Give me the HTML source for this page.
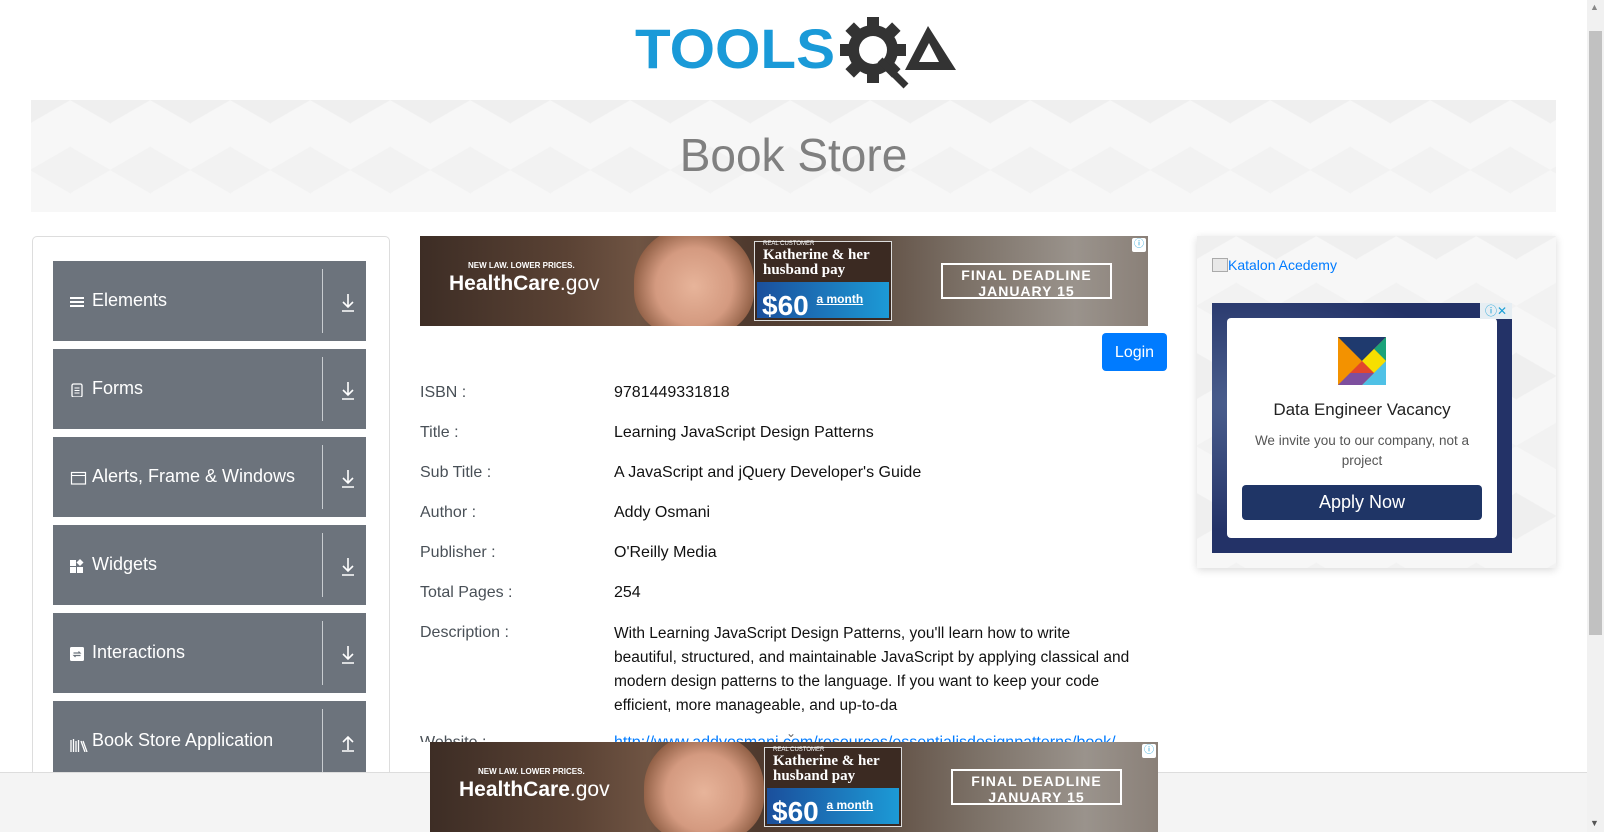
<!DOCTYPE html>
<html><head><meta charset="utf-8"><style>
*{margin:0;padding:0;box-sizing:border-box}
body{width:1604px;height:832px;overflow:hidden;background:#fff;font-family:"Liberation Sans","DejaVu Sans",sans-serif;position:relative;color:#212529}
.abs{position:absolute}
.banner{left:31px;top:100px;width:1525px;height:112px;background-color:#f7f7f7;
background-image:linear-gradient(30deg,#efefef 12%,transparent 12.5%,transparent 87%,#efefef 87.5%),linear-gradient(150deg,#efefef 12%,transparent 12.5%,transparent 87%,#efefef 87.5%),linear-gradient(30deg,#f2f2f2 12%,transparent 12.5%,transparent 87%,#f2f2f2 87.5%),linear-gradient(150deg,#f2f2f2 12%,transparent 12.5%,transparent 87%,#f2f2f2 87.5%);
background-size:80px 140px;background-position:0 0,0 0,40px 70px,40px 70px}
.title{left:0;width:1587px;top:128px;text-align:center;font-size:46px;color:#808080;font-weight:300}
.side{left:32px;top:236px;width:358px;height:560px;border:1px solid #ddd;border-radius:5px}
.item{left:53px;width:313px;height:80px;background:#6c737c;color:#fff;font-size:18px}
.item .t{position:absolute;left:39px;top:29px}
.item .ic{position:absolute;left:17px;top:34px;width:14px;height:14px}
.item .sep{position:absolute;left:269px;top:8px;width:1px;height:64px;background:#c8ccd0}
.item .ar{position:absolute;left:284px;top:25px;width:22px;height:28px}
.ad{width:728px;height:90px;overflow:hidden;background:linear-gradient(90deg,#3d2d25 0%,#5a4234 20%,#6f5443 30%,#4f3a2e 45%,#5c4a3e 60%,#7c7167 75%,#9a938c 90%,#8a8078 100%)}
.ad .face{position:absolute;left:214px;top:-10px;width:120px;height:110px;border-radius:50% 50% 40% 40%;background:radial-gradient(ellipse at 50% 55%,#e7b49a 0%,#d49a80 45%,#8a5a40 75%,transparent 80%)}
.ad .nl{position:absolute;left:48px;top:25px;font-size:8px;font-weight:bold;color:#fff}
.ad .hc{position:absolute;left:29px;top:36px;font-size:21px;color:#fff}
.ad .box{position:absolute;left:334px;top:5px;width:138px;height:80px;border:1px solid #ddd;background:#3b2a22}
.ad .box .k{position:absolute;left:8px;top:6px;font-family:"Liberation Serif",serif;font-weight:bold;font-size:15px;line-height:15px;color:#fff}
.ad .box .m{position:absolute;left:2px;top:40px;width:132px;height:36px;background:linear-gradient(90deg,#1b4f9c,#1c9ad6);color:#fff;font-weight:bold;font-size:28px;padding-left:5px;line-height:34px}
.ad .box .m span{font-size:12px;vertical-align:12px;text-decoration:underline}
.ad .fd{position:absolute;left:521px;top:27px;width:171px;height:36px;border:2px solid #fff;color:#fff;font-weight:bold;font-size:14px;text-align:center;line-height:16px;padding-top:2px;letter-spacing:1px}
.ad .i{position:absolute;right:2px;top:2px;width:14px;height:14px;background:#fff;color:#1a9fd6;font-size:10px;text-align:center;line-height:14px;border-radius:2px}
.lbl{left:420px;font-size:16px;color:#495057}
.val{left:614px;font-size:16px;color:#111}
</style></head><body>
<!-- logo -->
<svg class="abs" style="left:620px;top:10px" width="360" height="85" viewBox="620 10 360 85">
<text x="635" y="68" font-family="Liberation Sans,sans-serif" font-weight="bold" font-size="56" fill="#1a9ad8" textLength="200" lengthAdjust="spacingAndGlyphs">TOOLS</text>
<g fill="#333" transform="translate(873 50)"><circle r="25"/>
<rect x="-6" y="-33" width="12" height="66"/><rect x="-33" y="-6" width="66" height="12"/><rect x="-6" y="-33" width="12" height="66" transform="rotate(45)"/><rect x="-6" y="-33" width="12" height="66" transform="rotate(-45)"/></g>
<circle cx="873" cy="50" r="14" fill="#fff"/>
<path d="M880 60 L906 86" stroke="#333" stroke-width="7"/>
<path d="M905 70 L928 26 L956 70 Z M919 62 L939 62 L929 43 Z" fill="#333" fill-rule="evenodd"/>
</svg>
<div class="abs banner"></div>
<div class="abs title">Book Store</div>
<div class="abs side"></div>

<div class="abs item" style="top:261px"><svg class="ic" viewBox="0 0 14 14"><rect y="2" width="14" height="2" fill="#fff"/><rect y="6" width="14" height="2" fill="#fff"/><rect y="10" width="14" height="2" fill="#fff"/></svg><span class="t">Elements</span><i class="sep"></i><svg class="ar" viewBox="0 0 22 28"><path d="M11 8 V21 M6 16 L11 21 L16 16 M5 25 H17" stroke="#fff" stroke-width="1.6" fill="none"/></svg></div>
<div class="abs item" style="top:349px"><svg class="ic" viewBox="0 0 14 14"><rect x="2" y="1" width="10" height="13" rx="1.5" fill="none" stroke="#fff" stroke-width="1.3"/><path d="M4.5 5H9.5M4.5 7.5H9.5M4.5 10H9.5" stroke="#fff"/></svg><span class="t">Forms</span><i class="sep"></i><svg class="ar" viewBox="0 0 22 28"><path d="M11 8 V21 M6 16 L11 21 L16 16 M5 25 H17" stroke="#fff" stroke-width="1.6" fill="none"/></svg></div>
<div class="abs item" style="top:437px"><svg class="ic" viewBox="0 0 16 14" style="width:17px"><rect x="1" y="1.5" width="14" height="11.5" fill="none" stroke="#fff" stroke-width="1.2"/><path d="M1 4.5H15" stroke="#fff"/></svg><span class="t">Alerts, Frame &amp; Windows</span><i class="sep"></i><svg class="ar" viewBox="0 0 22 28"><path d="M11 8 V21 M6 16 L11 21 L16 16 M5 25 H17" stroke="#fff" stroke-width="1.6" fill="none"/></svg></div>
<div class="abs item" style="top:525px"><svg class="ic" viewBox="0 0 14 14"><rect x="0" y="1" width="6" height="6" fill="#fff"/><rect x="0" y="8" width="6" height="6" fill="#fff"/><rect x="7" y="8" width="6" height="6" fill="#fff"/><path d="M10 0 L13.5 3.5 L10 7 L6.5 3.5Z" fill="#fff"/></svg><span class="t">Widgets</span><i class="sep"></i><svg class="ar" viewBox="0 0 22 28"><path d="M11 8 V21 M6 16 L11 21 L16 16 M5 25 H17" stroke="#fff" stroke-width="1.6" fill="none"/></svg></div>
<div class="abs item" style="top:613px"><svg class="ic" viewBox="0 0 14 14"><rect x="0" y="0" width="14" height="14" rx="1.5" fill="#fff"/><path d="M3.5 6H10L8.5 4.5M10.5 8.5H4L5.5 10" stroke="#6c737c" stroke-width="1.2" fill="none"/></svg><span class="t">Interactions</span><i class="sep"></i><svg class="ar" viewBox="0 0 22 28"><path d="M11 8 V21 M6 16 L11 21 L16 16 M5 25 H17" stroke="#fff" stroke-width="1.6" fill="none"/></svg></div>
<div class="abs item" style="top:701px"><svg class="ic" viewBox="0 0 18 14" style="width:18px;top:37px"><path d="M1 2V14M3.5 1V14M6 3V14M8.5 2V14M11 3L15 14M13 3L17 14" stroke="#fff" stroke-width="1.3"/></svg><span class="t">Book Store Application</span><i class="sep"></i><svg class="ar" viewBox="0 0 22 28"><path d="M11 24 V11 M6 16 L11 11 L16 16 M5 25 H17" stroke="#fff" stroke-width="1.6" fill="none"/></svg></div>

<!-- top ad -->
<div class="abs ad" style="left:420px;top:236px"><div class="face"></div><div class="nl">NEW LAW. LOWER PRICES.</div><div class="hc"><b style="font-weight:600">HealthCare</b>.gov</div><div class="box"><div style="position:absolute;left:8px;top:-1px;font-size:6px;color:#fff">REAL CUSTOMER</div><div class="k">Katherine &amp; her<br>husband pay</div><div class="m">$60 <span>a month</span></div></div><div class="fd">FINAL DEADLINE<br>JANUARY 15</div><div class="i">ⓘ</div></div>

<div class="abs" style="left:1102px;top:333px;width:65px;height:38px;background:#007bff;border-radius:4px;color:#fff;font-size:16px;text-align:center;line-height:40px">Login</div>

<div class="abs lbl" style="top:384px">ISBN :</div><div class="abs val" style="top:384px">9781449331818</div>
<div class="abs lbl" style="top:424px">Title :</div><div class="abs val" style="top:424px">Learning JavaScript Design Patterns</div>
<div class="abs lbl" style="top:464px">Sub Title :</div><div class="abs val" style="top:464px">A JavaScript and jQuery Developer's Guide</div>
<div class="abs lbl" style="top:504px">Author :</div><div class="abs val" style="top:504px">Addy Osmani</div>
<div class="abs lbl" style="top:544px">Publisher :</div><div class="abs val" style="top:544px">O'Reilly Media</div>
<div class="abs lbl" style="top:584px">Total Pages :</div><div class="abs val" style="top:584px">254</div>
<div class="abs lbl" style="top:624px">Description :</div>
<div class="abs val" style="top:622px;line-height:24px;font-size:15.5px;white-space:nowrap">With Learning JavaScript Design Patterns, you'll learn how to write<br>beautiful, structured, and maintainable JavaScript by applying classical and<br>modern design patterns to the language. If you want to keep your code<br>efficient, more manageable, and up-to-da</div>
<div class="abs" style="left:420px;top:730px;width:740px;height:12px;overflow:hidden">
<div class="abs" style="left:0;top:4px;font-size:16px;color:#495057">Website :</div>
<div class="abs" style="left:194px;top:4px;font-size:16px;color:#007bff;white-space:nowrap">http://www.addyosmani.com/resources/essentialjsdesignpatterns/book/</div></div>
<div class="abs" style="left:786px;top:726px;color:#666;font-size:12px">⌄</div>

<!-- right ad -->
<div class="abs banner" style="left:1197px;top:236px;width:359px;height:332px;box-shadow:0 2px 8px rgba(0,0,0,.15)"></div>
<div class="abs" style="left:1212px;top:257px;font-size:14px;color:#007bff"><span style="display:inline-block;width:16px;height:14px;border:1px solid #aaa;background:#e8e8e8;vertical-align:-2px"></span>Katalon Acedemy</div>
<div class="abs" style="left:1212px;top:303px;width:300px;height:250px;background:radial-gradient(ellipse at 10% 40%,#4b5f8e,#233267 60%)"></div>
<div class="abs" style="left:1227px;top:318px;width:270px;height:220px;background:#fff;border-radius:4px"></div>
<div class="abs" style="left:1480px;top:303px;width:32px;height:16px;background:#e6eef3;color:#1a9fd6;font-size:12px;line-height:16px;text-align:center">ⓘ✕</div>
<svg class="abs" style="left:1338px;top:337px" width="48" height="48" viewBox="0 0 48 48"><rect width="48" height="48" fill="#f39200"/><path d="M0 0H48L24 24Z" fill="#1f3a6e"/><path d="M48 0V24L36 12Z" fill="#1aa37a"/><path d="M36 12L48 24L36 36L24 24Z" fill="#f6df00"/><path d="M48 24V48H24Z" fill="#4fc1e6"/><path d="M24 24L36 36H12Z" fill="#e2462c"/><path d="M0 48L12 36H36L24 48Z" fill="#7d4f9e"/></svg>
<div class="abs" style="left:1227px;top:400px;width:270px;text-align:center;font-size:17px;color:#222">Data Engineer Vacancy</div>
<div class="abs" style="left:1237px;top:431px;width:250px;text-align:center;font-size:13.5px;line-height:20px;color:#555">We invite you to our company, not a project</div>
<div class="abs" style="left:1242px;top:485px;width:240px;height:35px;background:#1f3566;border-radius:4px;color:#fff;font-size:18px;text-align:center;line-height:35px">Apply Now</div>

<!-- bottom bar -->
<div class="abs" style="left:0;top:772px;width:1587px;height:60px;background:#f4f4f4;border-top:1px solid #ddd"></div>
<div class="abs ad" style="left:430px;top:742px;height:90px"><div class="face"></div><div class="nl">NEW LAW. LOWER PRICES.</div><div class="hc"><b style="font-weight:600">HealthCare</b>.gov</div><div class="box"><div style="position:absolute;left:8px;top:-1px;font-size:6px;color:#fff">REAL CUSTOMER</div><div class="k">Katherine &amp; her<br>husband pay</div><div class="m">$60 <span>a month</span></div></div><div class="fd">FINAL DEADLINE<br>JANUARY 15</div><div class="i">ⓘ</div></div>

<!-- scrollbar -->
<div class="abs" style="left:1587px;top:0;width:17px;height:832px;background:#f1f1f1"></div>
<div class="abs" style="left:1589px;top:31px;width:13px;height:604px;background:#c1c1c1"></div>
<div class="abs" style="left:1590px;top:2px;font-size:9px;color:#888">▲</div>
<div class="abs" style="left:1590px;top:818px;font-size:9px;color:#555">▼</div>
</body></html>
